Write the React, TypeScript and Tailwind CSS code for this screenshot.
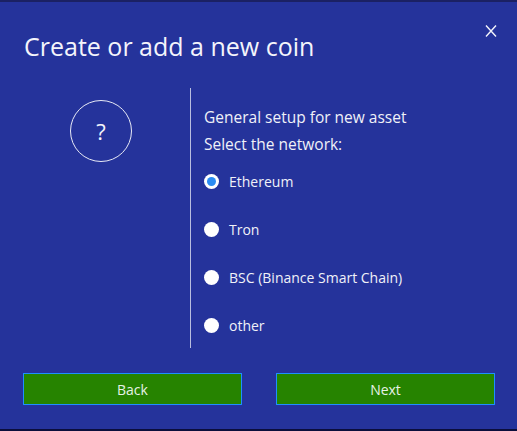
import React, { useState } from "react";

const networks = ["Ethereum", "Tron", "BSC (Binance Smart Chain)", "other"];

const Radio = ({ checked }: { checked: boolean }) =>
  checked ? (
    <span className="flex h-[15px] w-[15px] items-center justify-center rounded-full bg-white">
      <span className="h-[9px] w-[9px] rounded-full bg-[#2b8cf2]" />
    </span>
  ) : (
    <span className="h-[15px] w-[15px] rounded-full bg-white" />
  );

export default function App() {
  const [network, setNetwork] = useState("Ethereum");

  return (
    <div
      className="h-[431px] w-[517px] overflow-hidden border-t-2 border-b-2 border-t-[#1b2163] border-b-[#0b0e3c] bg-[#25339b] text-white"
      style={{ fontFamily: '"Open Sans", "Noto Sans", sans-serif' }}
    >
      <div className="relative flex h-[86px] items-start pl-6 pt-[28px]">
        <h1 className="text-[25px] leading-[32px] text-[#f4f5fb]">Create or add a new coin</h1>
        <button className="absolute right-[20px] top-[22px] text-[#f4f5fb]">
          <svg width="12" height="14" viewBox="0 0 12 14" fill="none" stroke="currentColor" strokeWidth="1.4">
            <path d="M1 1.5 L11 12.5 M11 1.5 L1 12.5" />
          </svg>
        </button>
      </div>

      <div className="flex h-[260px]">
        <div className="flex w-[190px] justify-center pl-[12px] pt-[12px]">
          <div className="flex h-[62px] w-[62px] items-center justify-center rounded-full border-[1.5px] border-[#e8eaf6] text-[22px] text-[#f4f5fb]">
            ?
          </div>
        </div>
        <div className="w-px bg-[#b9bedf]" />
        <div className="flex flex-col pl-[13px] pt-[19px] text-[#f0f1f8]">
          <p className="text-[15.5px] leading-[20px]">General setup for new asset</p>
          <p className="mt-[7px] text-[15.5px] leading-[20px]">Select the network:</p>
          <div className="mt-[3px] flex flex-col">
            {networks.map((n) => (
              <label
                key={n}
                className="flex h-[48px] cursor-pointer items-center gap-[10px] text-[14px]"
                onClick={() => setNetwork(n)}
              >
                <Radio checked={network === n} />
                <span>{n}</span>
              </label>
            ))}
          </div>
        </div>
      </div>

      <div className="flex justify-between pl-[23px] pr-[22px] pt-[25px]">
        <button className="h-[32px] w-[219px] border border-[#1e8fff] bg-[#268300] text-[14px] text-[#e6f2e6]">
          Back
        </button>
        <button className="h-[32px] w-[219px] border border-[#1e8fff] bg-[#268300] text-[14px] text-[#e6f2e6]">
          Next
        </button>
      </div>
    </div>
  );
}
